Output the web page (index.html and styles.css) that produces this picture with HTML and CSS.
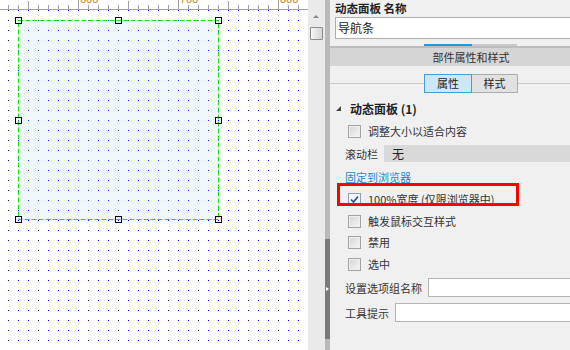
FILE: index.html
```html
<!DOCTYPE html>
<html lang="zh-CN">
<head>
<meta charset="utf-8">
<title>动态面板</title>
<link rel="stylesheet" href="styles.css">
</head>
<body>
<div class="app">
  <div class="design">
    <div class="ruler">
      <div class="ruler-labels"><span>600</span><span>700</span><span>800</span></div>
    </div>
    <div class="canvas">
      <div class="widget">
        <svg class="widget-frame" width="201" height="200" viewBox="0 0 201 200">
          <rect x="0.5" y="0.5" width="200" height="199" fill="rgba(173,216,230,0.2)" stroke="#14e414" stroke-width="1" stroke-dasharray="5 2"/>
        </svg>
        <span class="handle h-tl"></span>
        <span class="handle h-tc"></span>
        <span class="handle h-tr"></span>
        <span class="handle h-ml"></span>
        <span class="handle h-mr"></span>
        <span class="handle h-bl"></span>
        <span class="handle h-bc"></span>
        <span class="handle h-br"></span>
      </div>
    </div>
  </div>
  <div class="vscroll">
    <div class="arrow-up"></div>
    <div class="thumb"></div>
  </div>
  <div class="splitter">
    <div class="split-grip"><i></i></div>
  </div>
  <div class="inspector">
    <div class="title">动态面板 名称</div>
    <div class="name-input">导航条</div>
    <div class="hidden-tabs"><span class="ht-a"></span><span class="ht-b"></span></div>
    <div class="sec-band"></div>
    <div class="sec-head">部件属性和样式</div>
    <div class="tabs">
      <div class="tab active">属性</div>
      <div class="tab plain">样式</div>
    </div>
    <div class="group"><span class="tri"></span>动态面板 (1)</div>
    <div class="cb-row r1"><span class="cb"></span><span class="lbl">调整大小以适合内容</span></div>
    <div class="scroll-row"><span class="lbl">滚动栏</span><div class="select">无</div></div>
    <div class="link-row">固定到浏览器</div>
    <div class="cb-row r2"><span class="cb checked"><svg width="11" height="11" viewBox="0 0 11 11"><polyline points="2,5.5 4.5,8 9,2.5" fill="none" stroke="#3d3d9e" stroke-width="1.6"/></svg></span><span class="lbl">100%宽度 (仅限浏览器中)</span></div>
    <div class="cb-row r3"><span class="cb"></span><span class="lbl">触发鼠标交互样式</span></div>
    <div class="cb-row r4"><span class="cb"></span><span class="lbl">禁用</span></div>
    <div class="cb-row r5"><span class="cb"></span><span class="lbl">选中</span></div>
    <div class="field-row f1"><span class="lbl">设置选项组名称</span><div class="field"></div></div>
    <div class="field-row f2"><span class="lbl">工具提示</span><div class="field"></div></div>
    <div class="highlight"></div>
  </div>
</div>
</body>
</html>
```
FILE: styles.css
```css
body {
  margin: 0;
  width: 570px;
  height: 350px;
  overflow: hidden;
  background: #f0f0f0;
  font-family: "Noto Sans CJK SC", "Noto Sans", sans-serif;
  font-size: 11px;
  color: #333;
}

.app {
  display: grid;
  grid-template-columns: 308px 17px 5px 282px;
  height: 350px;
}

/* design canvas */
.design {
  display: flex;
  flex-direction: column;
  background: #fff;
  overflow: hidden;
}

.ruler {
  height: 9px;
  border-bottom: 1px solid #a0a0a0;
  overflow: hidden;
  background:
    linear-gradient(90deg, #a0a0a0 1px, transparent 1px) 78px 0 / 100px 1px repeat-x,
    linear-gradient(90deg, #a0a0a0 1px, transparent 1px) 28px 1px / 50px 8px repeat-x,
    linear-gradient(90deg, #a0a0a0 1px, transparent 1px) 8px 5px / 10px 4px repeat-x,
    #fff;
}

.ruler-labels {
  display: flex;
  padding-left: 80px;
  margin-top: -6px;
  font: 11px/11px "Liberation Sans", sans-serif;
  color: #c47a2c;
}

.ruler-labels span {
  width: 100px;
  flex: none;
}

.canvas {
  flex: 1;
  position: relative;
  background:
    linear-gradient(90deg, transparent 1px, #fff 1px) 8px 0 / 10px 10px,
    linear-gradient(180deg, transparent 1px, #fff 1px) 8px 0 / 10px 10px,
    #0000ff;
}

.widget {
  position: absolute;
  left: 18px;
  top: 10px;
  width: 201px;
  height: 200px;
}

.widget-frame {
  display: block;
}

.handle {
  position: absolute;
  width: 7px;
  height: 7px;
  box-sizing: border-box;
  border: 1px solid #000;
}

.h-tl { left: -3px; top: -3px; }
.h-tc { left: 97px; top: -3px; }
.h-tr { left: 197px; top: -3px; }
.h-ml { left: -3px; top: 97px; }
.h-mr { left: 197px; top: 97px; }
.h-bl { left: -3px; top: 196px; }
.h-bc { left: 97px; top: 196px; }
.h-br { left: 197px; top: 196px; }

/* vertical scrollbar */
.vscroll {
  background: #eaeaea;
  display: flex;
  flex-direction: column;
  align-items: flex-start;
  padding-top: 15px;
}

.arrow-up {
  margin-left: 5px;
  width: 0;
  height: 0;
  border-left: 3px solid transparent;
  border-right: 3px solid transparent;
  border-bottom: 3px solid #8a8a8a;
}

.thumb {
  margin: 9px 0 0 2px;
  width: 13px;
  height: 13px;
  box-sizing: border-box;
  border: 1px solid #8c8c8c;
  border-radius: 1px;
  background: linear-gradient(90deg, #f7f7f7, #d4d4d4);
}

/* splitter */
.splitter {
  background: #b9b9b9;
  display: flex;
  flex-direction: column;
}

.split-grip {
  margin-top: 239px;
  height: 100px;
  background: #7a7a7a;
  display: flex;
  align-items: center;
  padding-left: 1px;
}

.split-grip i {
  width: 0;
  height: 0;
  border-left: 3px solid #fff;
  border-top: 2px solid transparent;
  border-bottom: 2px solid transparent;
}

/* inspector */
.inspector {
  position: relative;
  background: #f0f0f0;
  display: flex;
  flex-direction: column;
}

.title {
  height: 17px;
  line-height: 17px;
  padding-left: 5px;
  font-weight: bold;
  font-size: 11.5px;
  color: #222;
}

.name-input {
  margin-left: 5px;
  height: 22px;
  box-sizing: border-box;
  border: 1px solid #adadad;
  background: #fff;
  font-size: 12px;
  line-height: 20px;
  padding-left: 2px;
  color: #222;
}

.hidden-tabs {
  margin: 5px 0 0 94px;
  height: 2px;
  display: flex;
}

.ht-a { width: 48px; background: #1e9be0; }
.ht-b { width: 45px; background: #c9c9c9; }

.sec-band {
  height: 2px;
  background: #bdbdbd;
}

.sec-head {
  height: 18px;
  line-height: 18px;
  background: #d5d5d5;
  text-align: center;
  color: #333;
}

.tabs {
  margin-top: 8px;
  height: 19px;
  display: flex;
  justify-content: center;
  background: linear-gradient(#c9c9c9, #c9c9c9) 0 9px / 100% 1px no-repeat;
}

.tab {
  box-sizing: border-box;
  height: 19px;
  line-height: 17px;
  text-align: center;
  color: #222;
}

.tab.active {
  width: 48px;
  border: 1px solid #3ba0dc;
  background: #cde7f7;
}

.tab.plain {
  width: 46px;
  border: 1px solid #adadad;
  border-left: 0;
  background: #e1e1e1;
}

.group {
  margin-top: 7px;
  height: 16px;
  display: flex;
  align-items: center;
  padding-left: 6px;
  font-weight: bold;
  font-size: 12px;
  color: #222;
}

.tri {
  width: 0;
  height: 0;
  border-left: 5px solid transparent;
  border-bottom: 5px solid #444;
  margin-right: 9px;
}

.cb-row {
  display: flex;
  align-items: flex-start;
  box-sizing: border-box;
  padding: 4px 0 0 18px;
}

.r1 { margin-top: 5px; height: 21px; }
.r2 { margin-top: 3px; height: 22px; }
.r3 { height: 21px; }
.r4 { height: 22px; }
.r5 { height: 21px; }

.cb {
  flex: none;
  width: 13px;
  height: 13px;
  box-sizing: border-box;
  border: 1px solid #a3a3a3;
  background: linear-gradient(135deg, #d4d4d4, #f7f7f7);
  box-shadow: inset 0 0 0 1px #efefef;
  margin-right: 7px;
  display: flex;
  align-items: center;
  justify-content: center;
}

.cb.checked {
  background: #f3f7fc;
  border-color: #8e9fb8;
  box-shadow: none;
}

.cb-row .lbl {
  line-height: 13px;
}

.scroll-row {
  margin-top: 3px;
  height: 17px;
  display: flex;
  align-items: center;
  padding-left: 15px;
}

.select {
  flex: 1;
  margin-left: 6px;
  height: 17px;
  line-height: 17px;
  background: #d9d9d9;
  padding-left: 8px;
  font-size: 12px;
  color: #222;
}

.link-row {
  margin-top: 6px;
  height: 18px;
  line-height: 18px;
  padding-left: 15px;
  color: #1e88d4;
}

.field-row {
  height: 19px;
  display: flex;
  align-items: center;
  padding-left: 15px;
}

.f1 { margin-top: 3px; }
.f2 { margin-top: 6px; }

.field {
  flex: 1;
  margin-left: 6px;
  height: 19px;
  box-sizing: border-box;
  border: 1px solid #b4b4b4;
  background: #fff;
}

.highlight {
  position: absolute;
  left: 7px;
  top: 183px;
  width: 182px;
  height: 23px;
  box-sizing: border-box;
  border: 3px solid #ff0000;
}
```
